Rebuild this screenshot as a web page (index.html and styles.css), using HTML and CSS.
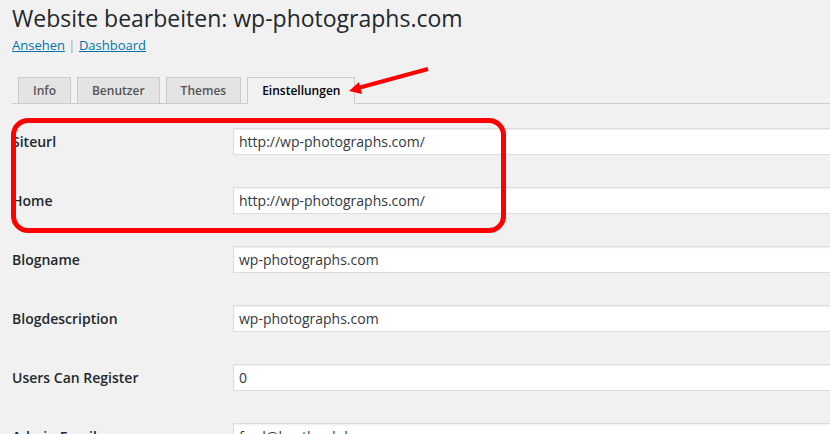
FILE: index.html
```html
<!DOCTYPE html>
<html lang="de">
<head>
    <meta charset="UTF-8">
    <title>Website bearbeiten: wp-photographs.com</title>
    <link rel="stylesheet" href="styles.css">
</head>
<body>
    <div class="wrap">
        <h1>Website bearbeiten: wp-photographs.com</h1>
        <p class="site-links">
            <a href="#">Ansehen</a> <span class="sep">|</span> <a href="#">Dashboard</a>
        </p>
        <nav class="tabs">
            <a class="tab" href="#">Info</a>
            <a class="tab" href="#">Benutzer</a>
            <a class="tab" href="#">Themes</a>
            <a class="tab active" href="#">Einstellungen</a>
        </nav>
        <form class="settings">
            <div class="row">
                <label for="siteurl">Siteurl</label>
                <input type="text" id="siteurl" value="http://wp-photographs.com/">
            </div>
            <div class="row">
                <label for="home">Home</label>
                <input type="text" id="home" value="http://wp-photographs.com/">
            </div>
            <div class="row">
                <label for="blogname">Blogname</label>
                <input type="text" id="blogname" value="wp-photographs.com">
            </div>
            <div class="row">
                <label for="blogdescription">Blogdescription</label>
                <input type="text" id="blogdescription" value="wp-photographs.com">
            </div>
            <div class="row">
                <label for="users-can-register">Users Can Register</label>
                <input type="text" id="users-can-register" value="0">
            </div>
            <div class="row">
                <label for="admin-email">Admin Email</label>
                <input type="text" id="admin-email" value="fred@hostland.de">
            </div>
        </form>
    </div>

    <!-- annotations drawn over the screenshot -->
    <div class="mark-box"></div>
    <svg class="mark-arrow" width="830" height="120" viewBox="0 0 830 120">
        <line x1="428" y1="69" x2="358" y2="88" stroke="#ff0000" stroke-width="4"/>
        <polygon points="349,91 362,94 359,82" fill="#ff0000"/>
    </svg>
</body>
</html>
```

FILE: styles.css
```css
html, body {
    margin: 0;
    padding: 0;
    height: 100%;
    overflow: hidden;
}

body {
    background-color: #f1f1f1;
    font-family: "Open Sans", "Noto Sans", sans-serif;
    color: #23282d;
    position: relative;
}

.wrap {
    padding-left: 12px;
}

h1 {
    font-size: 23px;
    font-weight: 400;
    line-height: 29px;
    margin: 4px 0 0;
    color: #23282d;
}

.site-links {
    margin: 2px 0 0;
    font-size: 13px;
    line-height: 20px;
}

.site-links a {
    color: #0073aa;
    text-decoration: underline;
}

.site-links .sep {
    color: #a0a5aa;
}

.tabs {
    display: flex;
    gap: 6px;
    margin-top: 22px;
    padding-left: 6px;
    border-bottom: 1px solid #ccc;
}

.tab {
    display: block;
    padding: 0 14px;
    height: 25px;
    line-height: 25px;
    margin-bottom: -1px;
    font-size: 12px;
    font-weight: 600;
    color: #555;
    text-decoration: none;
    background-color: #e4e4e4;
    border: 1px solid #ccc;
}

.tab.active {
    background-color: #f1f1f1;
    color: #000;
    border-bottom-color: #f1f1f1;
}

.settings {
    margin-top: 24px;
    display: flex;
    flex-direction: column;
    gap: 32px;
}

.row {
    display: grid;
    grid-template-columns: 221px 700px;
    align-items: center;
}

.row label {
    font-size: 14px;
    font-weight: 600;
    line-height: 27px;
    color: #23282d;
}

.row input {
    box-sizing: border-box;
    height: 27px;
    width: 100%;
    margin: 0;
    padding: 0 5px;
    font-family: "Open Sans", "Noto Sans", sans-serif;
    font-size: 14px;
    color: #32373c;
    background-color: #fff;
    border: 1px solid #ddd;
    box-shadow: inset 0 1px 2px rgba(0, 0, 0, 0.07);
    outline: none;
}

.mark-box {
    position: absolute;
    left: 11px;
    top: 118px;
    width: 485px;
    height: 105px;
    border: 5px solid #ff0000;
    border-radius: 17px;
}

.mark-arrow {
    position: absolute;
    left: 0;
    top: 0;
}
```
